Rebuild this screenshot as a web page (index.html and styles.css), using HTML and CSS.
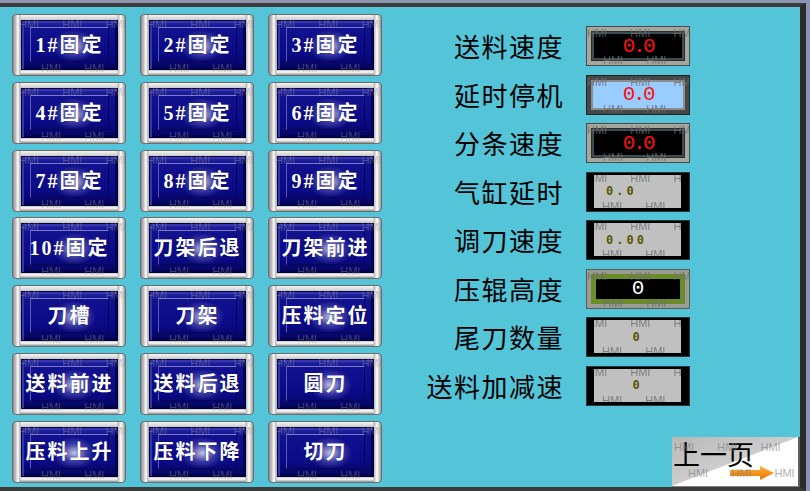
FILE: index.html
```html
<!DOCTYPE html>
<html lang="zh-CN">
<head>
<meta charset="utf-8">
<title>参数设置</title>
<link rel="stylesheet" href="styles.css">
</head>
<body>
<div class="screen">
  <div class="frame">
    <div class="keypad">
      <button class="key"><span class="key-face"><span class="key-text">1#固定</span></span><span class="wm wm-top">HMI HMI HMI</span><span class="wm wm-bot">HMI HMI</span></button>
      <button class="key"><span class="key-face"><span class="key-text">2#固定</span></span><span class="wm wm-top">HMI HMI HMI</span><span class="wm wm-bot">HMI HMI</span></button>
      <button class="key"><span class="key-face"><span class="key-text">3#固定</span></span><span class="wm wm-top">HMI HMI HMI</span><span class="wm wm-bot">HMI HMI</span></button>
      <button class="key"><span class="key-face"><span class="key-text">4#固定</span></span><span class="wm wm-top">HMI HMI HMI</span><span class="wm wm-bot">HMI HMI</span></button>
      <button class="key"><span class="key-face"><span class="key-text">5#固定</span></span><span class="wm wm-top">HMI HMI HMI</span><span class="wm wm-bot">HMI HMI</span></button>
      <button class="key"><span class="key-face"><span class="key-text">6#固定</span></span><span class="wm wm-top">HMI HMI HMI</span><span class="wm wm-bot">HMI HMI</span></button>
      <button class="key"><span class="key-face"><span class="key-text">7#固定</span></span><span class="wm wm-top">HMI HMI HMI</span><span class="wm wm-bot">HMI HMI</span></button>
      <button class="key"><span class="key-face"><span class="key-text">8#固定</span></span><span class="wm wm-top">HMI HMI HMI</span><span class="wm wm-bot">HMI HMI</span></button>
      <button class="key"><span class="key-face"><span class="key-text">9#固定</span></span><span class="wm wm-top">HMI HMI HMI</span><span class="wm wm-bot">HMI HMI</span></button>
      <button class="key"><span class="key-face"><span class="key-text">10#固定</span></span><span class="wm wm-top">HMI HMI HMI</span><span class="wm wm-bot">HMI HMI</span></button>
      <button class="key"><span class="key-face"><span class="key-text">刀架后退</span></span><span class="wm wm-top">HMI HMI HMI</span><span class="wm wm-bot">HMI HMI</span></button>
      <button class="key"><span class="key-face"><span class="key-text">刀架前进</span></span><span class="wm wm-top">HMI HMI HMI</span><span class="wm wm-bot">HMI HMI</span></button>
      <button class="key"><span class="key-face"><span class="key-text">刀槽</span></span><span class="wm wm-top">HMI HMI HMI</span><span class="wm wm-bot">HMI HMI</span></button>
      <button class="key"><span class="key-face"><span class="key-text">刀架</span></span><span class="wm wm-top">HMI HMI HMI</span><span class="wm wm-bot">HMI HMI</span></button>
      <button class="key"><span class="key-face"><span class="key-text">压料定位</span></span><span class="wm wm-top">HMI HMI HMI</span><span class="wm wm-bot">HMI HMI</span></button>
      <button class="key"><span class="key-face"><span class="key-text">送料前进</span></span><span class="wm wm-top">HMI HMI HMI</span><span class="wm wm-bot">HMI HMI</span></button>
      <button class="key"><span class="key-face"><span class="key-text">送料后退</span></span><span class="wm wm-top">HMI HMI HMI</span><span class="wm wm-bot">HMI HMI</span></button>
      <button class="key"><span class="key-face"><span class="key-text">圆刀</span></span><span class="wm wm-top">HMI HMI HMI</span><span class="wm wm-bot">HMI HMI</span></button>
      <button class="key"><span class="key-face"><span class="key-text">压料上升</span></span><span class="wm wm-top">HMI HMI HMI</span><span class="wm wm-bot">HMI HMI</span></button>
      <button class="key"><span class="key-face"><span class="key-text">压料下降</span></span><span class="wm wm-top">HMI HMI HMI</span><span class="wm wm-bot">HMI HMI</span></button>
      <button class="key"><span class="key-face"><span class="key-text">切刀</span></span><span class="wm wm-top">HMI HMI HMI</span><span class="wm wm-bot">HMI HMI</span></button>
    </div>

    <div class="side">
      <div class="params">
        <div class="label">送料速度</div>
        <div class="field f-red"><span class="val val-red">0.0</span><span class="wm wm-top">HMI HMI HMI</span><span class="wm wm-bot">HMI HMI</span></div>

        <div class="label">延时停机</div>
        <div class="field f-blue"><span class="val val-red">0.0</span><span class="wm wm-top">HMI HMI HMI</span><span class="wm wm-bot">HMI HMI</span></div>

        <div class="label">分条速度</div>
        <div class="field f-red"><span class="val val-red">0.0</span><span class="wm wm-top">HMI HMI HMI</span><span class="wm wm-bot">HMI HMI</span></div>

        <div class="label">气缸延时</div>
        <div class="field f-gray f-left"><span class="val val-olive">0.0</span><span class="wm wm-top">HMI HMI HMI</span><span class="wm wm-bot">HMI HMI H</span></div>

        <div class="label">调刀速度</div>
        <div class="field f-gray f-left"><span class="val val-olive">0.00</span><span class="wm wm-top">HMI HMI HMI</span><span class="wm wm-bot">HMI HMI H</span></div>

        <div class="label">压辊高度</div>
        <div class="field f-green"><span class="val val-white">0</span><span class="wm wm-top">HMI HMI HMI</span><span class="wm wm-bot">HMI HMI</span></div>

        <div class="label">尾刀数量</div>
        <div class="field f-gray"><span class="val val-olive">0</span><span class="wm wm-top">HMI HMI HMI</span><span class="wm wm-bot">HMI HMI H</span></div>

        <div class="label">送料加减速</div>
        <div class="field f-gray"><span class="val val-olive">0</span><span class="wm wm-top">HMI HMI HMI</span><span class="wm wm-bot">HMI HMI H</span></div>
      </div>

      <button class="prev-page">
        <span class="prev-label">上一页</span>
        <svg class="prev-arrow" width="44" height="14" viewBox="0 0 44 14">
          <defs>
            <linearGradient id="arrowFill" x1="0" y1="0" x2="0" y2="1">
              <stop offset="0" stop-color="#ffb040"/>
              <stop offset="1" stop-color="#e87800"/>
            </linearGradient>
          </defs>
          <path d="M0 4 H30 V0 L44 7 L30 14 V10 H0 Z" fill="url(#arrowFill)"/>
        </svg>
        <span class="wm wm-top">HMI HMI HMI H</span>
        <span class="wm wm-bot">HMI HMI HMI</span>
      </button>
    </div>
  </div>
</div>
</body>
</html>
```

FILE: styles.css
```css
html, body {
  margin: 0;
  padding: 0;
  background: #8c94b4;
}

.screen {
  width: 810px;
  height: 491px;
  box-sizing: border-box;
  padding: 3px 4px 0 0;
  background: #8c94b4;
  overflow: hidden;
}

.frame {
  box-sizing: border-box;
  height: 488px;
  border-top: 4px solid #3c3c3c;
  border-right: 6px solid #2c2c2c;
  border-bottom: 4px solid #3a3a3a;
  background: #54c4d8;
  display: flex;
}

/* ---- left keypad ---- */
.keypad {
  display: grid;
  grid-template-columns: repeat(3, 114px);
  grid-auto-rows: 62px;
  column-gap: 14px;
  row-gap: 5.8px;
  padding: 7px 0 0 12px;
  width: 370px;
  flex: none;
  align-content: start;
}

.key {
  position: relative;
  box-sizing: border-box;
  width: 114px;
  height: 62px;
  margin: 0;
  padding: 5px 7px 5px 8px;
  border: 1px solid #6c6c6c;
  border-radius: 4px;
  background:
    linear-gradient(90deg, #8a8a8a 0px, #c8c8c8 3px, #ffffff 5px, #b0b0b0 7px, transparent 8px,
      transparent calc(100% - 8px), #b8b8b8 calc(100% - 7px), #ffffff calc(100% - 4px), #9a9a9a 100%),
    linear-gradient(180deg, #f4f4f4 0px, #dcdcdc 3px, #c4c4c4 5px, #ababab 50%, #c4c4c4 calc(100% - 5px), #ffffff calc(100% - 3px), #909090 100%);
  overflow: hidden;
  cursor: pointer;
  font: inherit;
}

.key-face {
  position: relative;
  display: flex;
  align-items: center;
  justify-content: center;
  height: 100%;
  box-sizing: border-box;
  border: 1px solid #00003a;
  background:
    radial-gradient(ellipse 22px 16px at 55% 52%, rgba(255, 255, 255, 0.75), rgba(200, 200, 255, 0.25) 55%, transparent 100%),
    linear-gradient(180deg, #2a2aa8 0%, #12128e 14%, #0a0a86 70%, #05055e 100%);
  box-shadow: inset 2px 2px 0 #3434b0, inset -2px -2px 0 #020250;
}

.key-face::before {
  content: "";
  position: absolute;
  left: 8px;
  right: 8px;
  top: 6px;
  bottom: 7px;
  border-top: 1px solid #7a7ad0;
  border-left: 1px solid #5a5ac0;
  border-right: 1px solid #05055a;
  border-bottom: 1px solid #05055a;
}

.key-text {
  position: relative;
  color: #ffffff;
  font-family: "Liberation Serif", "Noto Sans CJK SC", serif;
  font-weight: 700;
  font-size: 20px;
  letter-spacing: 2px;
  line-height: 1;
  white-space: nowrap;
  text-shadow: 0 0 1px #000060;
}

/* faint editor watermark over widgets */
.wm {
  position: absolute;
  font-family: "Liberation Sans", sans-serif;
  font-size: 11px;
  line-height: 11px;
  white-space: pre;
  word-spacing: 20px;
  color: rgba(140, 140, 150, 0.45);
  pointer-events: none;
}

.key .wm-top { left: 6px; top: 4px; }
.key .wm-bot { left: 28px; bottom: 1px; }

/* ---- right parameter panel ---- */
.side {
  flex: 1;
  display: flex;
  flex-direction: column;
  padding-left: 18px;
}

.params {
  display: grid;
  grid-template-columns: 164px 104px;
  grid-auto-rows: 40px;
  column-gap: 22px;
  row-gap: 8.5px;
  padding-top: 19px;
  align-items: center;
}

.label {
  text-align: right;
  font-family: "Noto Sans CJK SC", sans-serif;
  font-size: 26px;
  letter-spacing: 1.5px;
  line-height: 40px;
  color: #000;
  white-space: nowrap;
}

.field {
  position: relative;
  box-sizing: border-box;
  width: 104px;
  height: 40px;
  display: flex;
  align-items: center;
  justify-content: center;
  overflow: hidden;
}

.f-red {
  background: #000;
  border: 1px solid #4a4a4a;
  box-shadow: inset 0 0 0 4px #a6a69c, inset 0 0 0 5px #2c2c2c, inset 0 0 0 7px #3a4c54;
}

.f-blue {
  background: #99ccff;
  border: 1px solid #222;
  box-shadow: inset 0 0 0 4px #474747, inset 0 0 0 6px #8c8c8c;
}

.f-gray {
  background: #c0c0c0;
  border-style: solid;
  border-color: #000;
  border-width: 3px 9px 4px 8px;
  outline: 1px solid #333;
  outline-offset: -1px;
}

.f-left {
  justify-content: flex-start;
  padding-left: 12px;
}

.f-green {
  background: #000;
  border: 1px solid #5a5a5a;
  box-shadow: inset 0 0 0 4px #9c9c96, inset 0 0 0 9px #6b8c2a;
}

.val {
  position: relative;
  white-space: nowrap;
}

.val-red {
  color: #ff1010;
  font-family: "Liberation Mono", monospace;
  font-size: 21px;
  letter-spacing: -2.5px;
  line-height: 1;
}

.val-white {
  color: #ffffff;
  font-family: "Liberation Mono", monospace;
  font-size: 21px;
  line-height: 1;
}

.val-olive {
  color: #5c5800;
  font-family: "DejaVu Sans Mono", monospace;
  font-weight: 700;
  font-size: 12px;
  letter-spacing: 3px;
  line-height: 1;
}

.field .wm-top { left: 0; top: 1px; color: rgba(110, 110, 110, 0.8); }
.field .wm-bot { left: 16px; bottom: -1px; color: rgba(110, 110, 110, 0.8); }
.f-gray .wm-top { left: -7px; top: -2px; }
.f-gray .wm-bot { left: 8px; bottom: -4px; }

/* ---- page switch ---- */
.prev-page {
  position: relative;
  margin: auto 0 0 auto;
  box-sizing: border-box;
  width: 128px;
  height: 50px;
  padding: 2px 0 0 1px;
  border: none;
  border-right: 2px solid #606060;
  border-bottom: 1px solid #808080;
  background: linear-gradient(to bottom right, #b8b8b8 0%, #cdcdcd 49.6%, #ffffff 50.4%, #ffffff 100%);
  display: flex;
  flex-direction: column;
  align-items: flex-start;
  overflow: hidden;
  cursor: pointer;
}

.prev-label {
  font-family: "Noto Sans CJK SC", sans-serif;
  font-size: 27px;
  line-height: 30px;
  color: #000;
  white-space: nowrap;
}

.prev-arrow {
  display: block;
  margin: -3px 0 0 57px;
}

.prev-page .wm-top { left: 2px; top: 5px; color: rgba(120, 120, 120, 0.6); }
.prev-page .wm-bot { left: 16px; top: 31px; color: rgba(120, 120, 120, 0.6); }
```
